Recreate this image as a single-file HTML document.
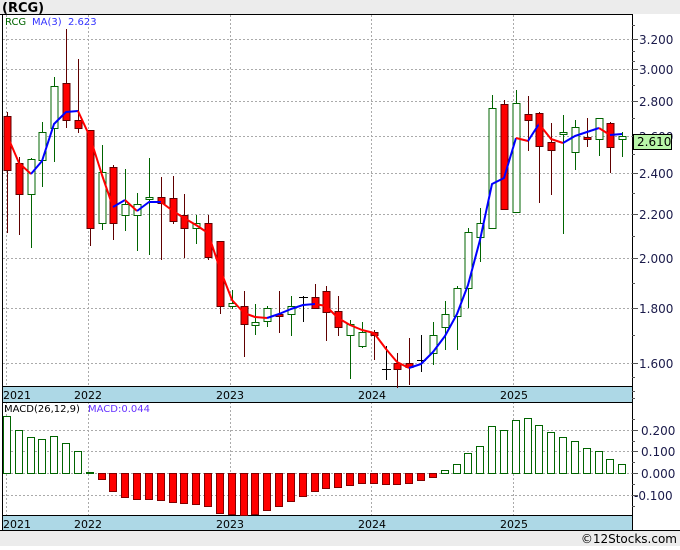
<!DOCTYPE html>
<html><head><meta charset="utf-8"><style>
html,body{margin:0;padding:0;background:#fff;}
body{width:680px;height:546px;overflow:hidden;font-family:"DejaVu Sans","Liberation Sans",sans-serif;}
svg text{font-family:"DejaVu Sans","Liberation Sans",sans-serif;}
</style></head><body>
<svg width="680" height="546" viewBox="0 0 680 546" xmlns="http://www.w3.org/2000/svg" shape-rendering="crispEdges">
<rect x="0" y="0" width="680" height="546" fill="#fff"/>
<rect x="0" y="0" width="680" height="14" fill="#ececec"/>
<rect x="0" y="530" width="680" height="16" fill="#ececec"/>
<text x="2" y="12" font-size="13" font-weight="bold" fill="#000">(RCG)</text>
<text x="677" y="543" font-size="12" fill="#000" text-anchor="end">©12Stocks.com</text>
<rect x="2" y="387" width="630" height="15" fill="#add8e6"/>
<rect x="2" y="516" width="630" height="14" fill="#add8e6"/>
<g font-size="11" fill="#000">
<text x="3" y="399">2021</text><text x="74" y="399">2022</text><text x="216" y="399">2023</text><text x="358" y="399">2024</text><text x="500" y="399">2025</text>
<text x="3" y="528">2021</text><text x="74" y="528">2022</text><text x="216" y="528">2023</text><text x="358" y="528">2024</text><text x="500" y="528">2025</text>
</g>
<g stroke="#aaa" stroke-width="1" stroke-dasharray="2,2">
<line x1="3" x2="632" y1="39.5" y2="39.5"/><line x1="3" x2="632" y1="69.5" y2="69.5"/><line x1="3" x2="632" y1="101.5" y2="101.5"/><line x1="3" x2="632" y1="136.5" y2="136.5"/><line x1="3" x2="632" y1="173.5" y2="173.5"/><line x1="3" x2="632" y1="214.5" y2="214.5"/><line x1="3" x2="632" y1="258.5" y2="258.5"/><line x1="3" x2="632" y1="308.5" y2="308.5"/><line x1="3" x2="632" y1="363.5" y2="363.5"/>
<line x1="3" x2="632" y1="430.5" y2="430.5"/><line x1="3" x2="632" y1="451.5" y2="451.5"/><line x1="3" x2="632" y1="473.5" y2="473.5"/><line x1="3" x2="632" y1="495.5" y2="495.5"/>
<line x1="6.5" x2="6.5" y1="15" y2="387"/><line x1="88.5" x2="88.5" y1="15" y2="387"/><line x1="230.5" x2="230.5" y1="15" y2="387"/><line x1="371.5" x2="371.5" y1="15" y2="387"/><line x1="513.5" x2="513.5" y1="15" y2="387"/>
<line x1="6.5" x2="6.5" y1="402" y2="516"/><line x1="88.5" x2="88.5" y1="402" y2="516"/><line x1="230.5" x2="230.5" y1="402" y2="516"/><line x1="371.5" x2="371.5" y1="402" y2="516"/><line x1="513.5" x2="513.5" y1="402" y2="516"/>
</g>
<g stroke="#000" stroke-width="1">
<line x1="0" x2="632" y1="14.5" y2="14.5"/>
<line x1="2.5" x2="2.5" y1="14" y2="530"/>
<line x1="632.5" x2="632.5" y1="14" y2="530"/>
<line x1="2" x2="632" y1="386.5" y2="386.5"/>
<line x1="2" x2="632" y1="402.5" y2="402.5"/>
<line x1="2" x2="632" y1="515.5" y2="515.5"/>
<line x1="0" x2="680" y1="530.5" y2="530.5"/>
</g>
<g stroke="#555" stroke-width="1">
<line x1="632" x2="638" y1="39.5" y2="39.5"/><line x1="632" x2="638" y1="69.5" y2="69.5"/><line x1="632" x2="638" y1="101.5" y2="101.5"/><line x1="632" x2="638" y1="136.5" y2="136.5"/><line x1="632" x2="638" y1="173.5" y2="173.5"/><line x1="632" x2="638" y1="214.5" y2="214.5"/><line x1="632" x2="638" y1="258.5" y2="258.5"/><line x1="632" x2="638" y1="308.5" y2="308.5"/><line x1="632" x2="638" y1="363.5" y2="363.5"/>
<line x1="632" x2="635" y1="25.5" y2="25.5"/><line x1="632" x2="635" y1="51.5" y2="51.5"/><line x1="632" x2="635" y1="61.5" y2="61.5"/><line x1="632" x2="635" y1="85.5" y2="85.5"/><line x1="632" x2="635" y1="118.5" y2="118.5"/><line x1="632" x2="635" y1="154.5" y2="154.5"/><line x1="632" x2="635" y1="193.5" y2="193.5"/><line x1="632" x2="635" y1="236.5" y2="236.5"/><line x1="632" x2="635" y1="283.5" y2="283.5"/><line x1="632" x2="635" y1="335.5" y2="335.5"/><line x1="632" x2="635" y1="377.5" y2="377.5"/>
<line x1="632" x2="638" y1="430.5" y2="430.5"/><line x1="632" x2="638" y1="451.5" y2="451.5"/><line x1="632" x2="638" y1="473.5" y2="473.5"/><line x1="632" x2="638" y1="495.5" y2="495.5"/>
<line x1="632" x2="635" y1="419.5" y2="419.5"/><line x1="632" x2="635" y1="441.5" y2="441.5"/><line x1="632" x2="635" y1="462.5" y2="462.5"/><line x1="632" x2="635" y1="484.5" y2="484.5"/><line x1="632" x2="635" y1="506.5" y2="506.5"/>
<line x1="632" x2="635" y1="391.5" y2="391.5"/><line x1="632" x2="635" y1="398.5" y2="398.5"/>
</g>
<g font-size="12" fill="#1a1a4a">
<text x="639" y="44">3.200</text><text x="639" y="74">3.000</text><text x="639" y="106">2.800</text><text x="639" y="141">2.600</text><text x="639" y="178">2.400</text><text x="639" y="219">2.200</text><text x="639" y="263">2.000</text><text x="639" y="313">1.800</text><text x="639" y="368">1.600</text>
<text x="641" y="435">0.200</text><text x="641" y="456">0.100</text><text x="641" y="478">0.000</text><text x="634" y="500">-0.100</text>
</g>
<rect x="633.5" y="134.5" width="38" height="15" fill="#b8f5a8" stroke="#000"/>
<text x="637" y="146" font-size="12" fill="#000">2.610</text>
<text x="5" y="25" font-size="10" fill="#006400">RCG</text>
<text x="32" y="25" font-size="10" fill="#3333ff">MA(3)</text>
<text x="68" y="25" font-size="10" fill="#3333ff">2.623</text>
<text x="4" y="412" font-size="10" fill="#000">MACD(26,12,9)</text>
<text x="88" y="412" font-size="10" fill="#6633ff">MACD:0.044</text>
<g fill="#fff" stroke="#006400" stroke-width="1">
<rect x="3.5" y="416.5" width="7" height="57"/><rect x="15.5" y="430.5" width="7" height="43"/><rect x="27.5" y="437.5" width="7" height="36"/><rect x="38.5" y="439.5" width="7" height="34"/><rect x="50.5" y="436.5" width="7" height="37"/><rect x="62.5" y="443.5" width="7" height="30"/><rect x="74.5" y="451.5" width="7" height="22"/><rect x="86.5" y="472.5" width="7" height="1"/>
<rect x="441.5" y="470.5" width="7" height="3"/><rect x="453.5" y="464.5" width="7" height="9"/><rect x="464.5" y="453.5" width="7" height="20"/><rect x="476.5" y="446.5" width="7" height="27"/><rect x="488.5" y="426.5" width="7" height="47"/><rect x="500.5" y="430.5" width="7" height="43"/><rect x="512.5" y="420.5" width="7" height="53"/><rect x="524.5" y="418.5" width="7" height="55"/><rect x="535.5" y="425.5" width="7" height="48"/><rect x="547.5" y="432.5" width="7" height="41"/><rect x="559.5" y="437.5" width="7" height="36"/><rect x="571.5" y="441.5" width="7" height="32"/><rect x="583.5" y="448.5" width="7" height="25"/><rect x="595.5" y="451.5" width="7" height="22"/><rect x="606.5" y="459.5" width="7" height="14"/><rect x="618.5" y="464.5" width="7" height="9"/>
</g>
<g fill="#ff0000" stroke="#800000" stroke-width="1">
<rect x="98.5" y="473.5" width="7" height="6"/><rect x="109.5" y="473.5" width="7" height="18"/><rect x="121.5" y="473.5" width="7" height="24"/><rect x="133.5" y="473.5" width="7" height="26"/><rect x="145.5" y="473.5" width="7" height="26"/><rect x="157.5" y="473.5" width="7" height="27"/><rect x="169.5" y="473.5" width="7" height="29"/><rect x="180.5" y="473.5" width="7" height="30"/><rect x="192.5" y="473.5" width="7" height="31"/><rect x="204.5" y="473.5" width="7" height="33"/><rect x="216.5" y="473.5" width="7" height="40"/><rect x="228.5" y="473.5" width="7" height="41"/><rect x="240.5" y="473.5" width="7" height="42"/><rect x="251.5" y="473.5" width="7" height="41"/><rect x="263.5" y="473.5" width="7" height="37"/><rect x="275.5" y="473.5" width="7" height="33"/><rect x="287.5" y="473.5" width="7" height="28"/><rect x="299.5" y="473.5" width="7" height="23"/><rect x="311.5" y="473.5" width="7" height="18"/><rect x="322.5" y="473.5" width="7" height="15"/><rect x="334.5" y="473.5" width="7" height="14"/><rect x="346.5" y="473.5" width="7" height="12"/><rect x="358.5" y="473.5" width="7" height="10"/><rect x="370.5" y="473.5" width="7" height="10"/><rect x="382.5" y="473.5" width="7" height="11"/><rect x="393.5" y="473.5" width="7" height="11"/><rect x="405.5" y="473.5" width="7" height="10"/><rect x="417.5" y="473.5" width="7" height="7"/><rect x="429.5" y="473.5" width="7" height="4"/>
</g>
<g stroke-width="1">
<g stroke="#600000">
<line x1="7.5" x2="7.5" y1="112" y2="233"/><line x1="19.5" x2="19.5" y1="157" y2="235"/><line x1="66.5" x2="66.5" y1="29" y2="128"/><line x1="78.5" x2="78.5" y1="59" y2="133"/><line x1="90.5" x2="90.5" y1="130" y2="246"/><line x1="113.5" x2="113.5" y1="165" y2="240"/><line x1="161.5" x2="161.5" y1="177" y2="260"/><line x1="173.5" x2="173.5" y1="176" y2="224"/><line x1="184.5" x2="184.5" y1="194" y2="258"/><line x1="208.5" x2="208.5" y1="215" y2="260"/><line x1="220.5" x2="220.5" y1="241" y2="314"/><line x1="244.5" x2="244.5" y1="291" y2="357"/><line x1="279.5" x2="279.5" y1="291" y2="333"/><line x1="315.5" x2="315.5" y1="284" y2="308"/><line x1="326.5" x2="326.5" y1="286" y2="341"/><line x1="338.5" x2="338.5" y1="296" y2="336"/><line x1="374.5" x2="374.5" y1="330" y2="360"/><line x1="397.5" x2="397.5" y1="353" y2="388"/><line x1="409.5" x2="409.5" y1="338" y2="385"/><line x1="504.5" x2="504.5" y1="100" y2="209"/><line x1="528.5" x2="528.5" y1="96" y2="151"/><line x1="539.5" x2="539.5" y1="112" y2="203"/><line x1="551.5" x2="551.5" y1="123" y2="195"/><line x1="587.5" x2="587.5" y1="118" y2="147"/><line x1="610.5" x2="610.5" y1="122" y2="173"/>
</g>
<g stroke="#006400">
<line x1="31.5" x2="31.5" y1="158" y2="248"/><line x1="42.5" x2="42.5" y1="122" y2="187"/><line x1="54.5" x2="54.5" y1="77" y2="162"/><line x1="102.5" x2="102.5" y1="145" y2="230"/><line x1="125.5" x2="125.5" y1="169" y2="231"/><line x1="137.5" x2="137.5" y1="193" y2="251"/><line x1="149.5" x2="149.5" y1="158" y2="255"/><line x1="196.5" x2="196.5" y1="215" y2="244"/><line x1="232.5" x2="232.5" y1="290" y2="309"/><line x1="255.5" x2="255.5" y1="304" y2="335"/><line x1="267.5" x2="267.5" y1="306" y2="327"/><line x1="291.5" x2="291.5" y1="296" y2="336"/><line x1="350.5" x2="350.5" y1="320" y2="379"/><line x1="362.5" x2="362.5" y1="322" y2="348"/><line x1="433.5" x2="433.5" y1="322" y2="365"/><line x1="445.5" x2="445.5" y1="301" y2="350"/><line x1="457.5" x2="457.5" y1="286" y2="350"/><line x1="468.5" x2="468.5" y1="228" y2="308"/><line x1="480.5" x2="480.5" y1="208" y2="262"/><line x1="492.5" x2="492.5" y1="95" y2="228"/><line x1="516.5" x2="516.5" y1="90" y2="212"/><line x1="563.5" x2="563.5" y1="115" y2="234"/><line x1="575.5" x2="575.5" y1="120" y2="170"/><line x1="599.5" x2="599.5" y1="118" y2="156"/><line x1="622.5" x2="622.5" y1="132" y2="157"/>
</g>
<g stroke="#000">
<line x1="303.5" x2="303.5" y1="296" y2="322"/><line x1="299" x2="308" y1="297.5" y2="297.5"/>
<line x1="386.5" x2="386.5" y1="346" y2="380"/><line x1="382" x2="391" y1="369.5" y2="369.5"/>
<line x1="421.5" x2="421.5" y1="335" y2="372"/><line x1="417" x2="426" y1="360.5" y2="360.5"/>
</g>
</g>
<g fill="#ff0000" stroke="#600000" stroke-width="1">
<rect x="4" y="116.5" width="7" height="54"/><rect x="16" y="163.5" width="7" height="31"/><rect x="63" y="83.5" width="7" height="37"/><rect x="75" y="120.5" width="7" height="8"/><rect x="87" y="130.5" width="7" height="98"/><rect x="110" y="167.5" width="7" height="56"/><rect x="158" y="197.5" width="7" height="6"/><rect x="170" y="198.5" width="7" height="23"/><rect x="181" y="215.5" width="7" height="13"/><rect x="205" y="223.5" width="7" height="34"/><rect x="217" y="241.5" width="7" height="65"/><rect x="241" y="306.5" width="7" height="18"/><rect x="276" y="314.5" width="7" height="2"/><rect x="312" y="297.5" width="7" height="11"/><rect x="323" y="291.5" width="7" height="21"/><rect x="335" y="311.5" width="7" height="16"/><rect x="371" y="332.5" width="7" height="3"/><rect x="394" y="363.5" width="7" height="6"/><rect x="406" y="363.5" width="7" height="4"/><rect x="501" y="104.5" width="7" height="105"/><rect x="525" y="114.5" width="7" height="6"/><rect x="536" y="113.5" width="7" height="33"/><rect x="548" y="142.5" width="7" height="8"/><rect x="584" y="137.5" width="7" height="2"/><rect x="607" y="123.5" width="7" height="24"/>
</g>
<g fill="#fff" stroke="#006400" stroke-width="1">
<rect x="28" y="159.5" width="7" height="35"/><rect x="39" y="132.5" width="7" height="28"/><rect x="51" y="86.5" width="7" height="42"/><rect x="99" y="172.5" width="7" height="51"/><rect x="122" y="204.5" width="7" height="11"/><rect x="134" y="204.5" width="7" height="11"/><rect x="146" y="197.5" width="7" height="2"/><rect x="193" y="223.5" width="7" height="5"/><rect x="229" y="303.5" width="7" height="3"/><rect x="252" y="322.5" width="7" height="3"/><rect x="264" y="308.5" width="7" height="13"/><rect x="288" y="306.5" width="7" height="8"/><rect x="347" y="324.5" width="7" height="11"/><rect x="359" y="332.5" width="7" height="14"/><rect x="430" y="335.5" width="7" height="18"/><rect x="442" y="314.5" width="7" height="13"/><rect x="454" y="288.5" width="7" height="28"/><rect x="465" y="232.5" width="7" height="56"/><rect x="477" y="223.5" width="7" height="14"/><rect x="489" y="108.5" width="7" height="120"/><rect x="513" y="103.5" width="7" height="109"/><rect x="560" y="132.5" width="7" height="2"/><rect x="572" y="127.5" width="7" height="25"/><rect x="596" y="118.5" width="7" height="21"/><rect x="619" y="136.5" width="7" height="3"/>
</g>
<g fill="none" stroke-width="2" shape-rendering="auto" stroke-linejoin="round">
<polyline stroke="#ff0000" points="7,135 19,163 31,174"/>
<polyline stroke="#0000ff" points="31,174 42,161 54,124 66,112 78,111"/>
<polyline stroke="#ff0000" points="78,111 90,137 102,175 113,207"/>
<polyline stroke="#0000ff" points="113,207 125,200"/>
<polyline stroke="#ff0000" points="125,200 137,211"/>
<polyline stroke="#0000ff" points="137,211 149,202 161,202"/>
<polyline stroke="#ff0000" points="161,202 173,211 184,218 196,225 208,233 220,269 232,300 244,313 255,317 267,318"/>
<polyline stroke="#0000ff" points="267,318 279,314 291,309 303,305 315,304"/>
<polyline stroke="#ff0000" points="315,304 326,306 338,318 350,325 362,330 374,333 386,349 397,362 409,368"/>
<polyline stroke="#0000ff" points="409,368 421,364 433,352 445,336 457,314 468,285 480,240 492,184 504,178 516,138"/>
<polyline stroke="#ff0000" points="516,138 528,141"/>
<polyline stroke="#0000ff" points="528,141 539,124"/>
<polyline stroke="#ff0000" points="539,124 551,139 563,143"/>
<polyline stroke="#0000ff" points="563,143 575,136 587,132 599,128"/>
<polyline stroke="#ff0000" points="599,128 610,135"/>
<polyline stroke="#0000ff" points="610,135 622,134"/>
</g>
</svg>
</body></html>
